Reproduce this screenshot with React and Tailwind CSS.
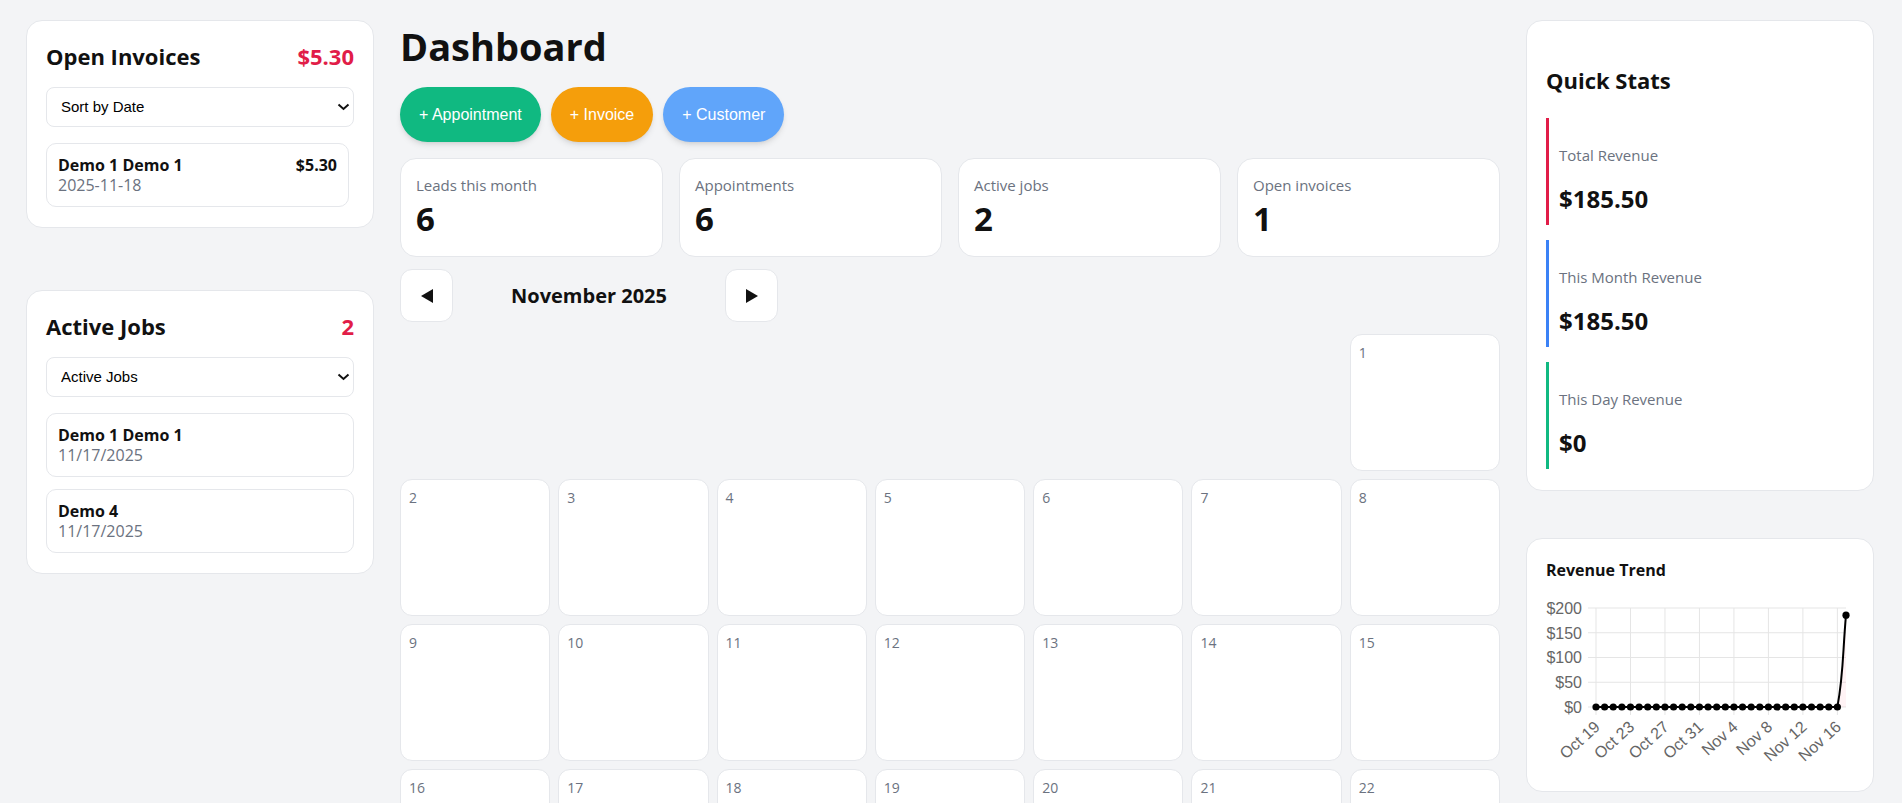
import React from 'react';

const invoices = [{ name: 'Demo 1 Demo 1', date: '2025-11-18', amount: '$5.30' }];
const jobs = [
  { name: 'Demo 1 Demo 1', date: '11/17/2025' },
  { name: 'Demo 4', date: '11/17/2025' },
];
const stats = [
  { label: 'Leads this month', value: 6 },
  { label: 'Appointments', value: 6 },
  { label: 'Active jobs', value: 2 },
  { label: 'Open invoices', value: 1 },
];
const quick = [
  { label: 'Total Revenue', value: '$185.50', bar: 'border-[#e11d48]' },
  { label: 'This Month Revenue', value: '$185.50', bar: 'border-[#3b82f6]' },
  { label: 'This Day Revenue', value: '$0', bar: 'border-[#10b981]' },
];

const Chevron = () => (
  <svg className="pointer-events-none absolute right-[4px] top-1/2 -translate-y-1/2" width="13" height="8" viewBox="0 0 13 8">
    <polyline points="1.5,1.5 6.5,6 11.5,1.5" fill="none" stroke="#111" strokeWidth="2" />
  </svg>
);

const Select = ({ value }) => (
  <div className="relative">
    <select className="h-10 w-full appearance-none rounded-lg border border-[#e5e7eb] bg-white pl-[14px] text-[15px] text-black font-['Liberation_Sans',Arial,sans-serif] outline-none">
      <option>{value}</option>
    </select>
    <Chevron />
  </div>
);

const SideCard = ({ title, badge, children }) => (
  <div className="rounded-2xl border border-[#e5e7eb] bg-white px-[19px] pt-[19px] pb-5">
    <div className="mb-[15px] flex items-center justify-between">
      <h2 className="text-[22px] font-bold leading-8 text-[#111]">{title}</h2>
      <span className="text-[22px] font-bold leading-8 text-[#e11d48]">{badge}</span>
    </div>
    {children}
  </div>
);

// Revenue trend chart, drawn by hand
const RevenueChart = () => {
  const x0 = 50, x1 = 300, yTop = 22, yBot = 121;
  const xs = (i) => x0 + (i * (x1 - x0)) / 29;
  const ys = (v) => yBot - (v / 200) * (yBot - yTop);
  const start = new Date(2025, 9, 19);
  const months = ['Oct', 'Nov'];
  const label = (i) => {
    const d = new Date(start.getTime() + i * 86400000);
    return `${months[d.getMonth() - 9]} ${d.getDate()}`;
  };
  const values = Array.from({ length: 30 }, (_, i) => (i === 29 ? 185.5 : 0));
  const ticks = [0, 4, 8, 12, 16, 20, 24, 28];
  const last = { x: xs(29), y: ys(185.5) };
  const prev = { x: xs(28), y: ys(0) };
  const curve = `M${prev.x} ${prev.y} C${prev.x + 6.3} ${prev.y - 33.6}, ${last.x - 3.4} ${last.y + 36.7}, ${last.x} ${last.y}`;
  return (
    <svg width="308" height="186" viewBox="0 0 308 186" className="font-['Liberation_Sans',Arial,sans-serif]">
      {[0, 50, 100, 150, 200].map((v) => (
        <g key={v}>
          <line x1={x0 - 8} x2={x1} y1={ys(v)} y2={ys(v)} stroke="#e5e5e5" strokeWidth="1" />
          <text x={x0 - 14} y={ys(v)} dy="0.36em" textAnchor="end" fontSize="16" fill="#666">${v}</text>
        </g>
      ))}
      {ticks.map((i) => (
        <g key={i}>
          <line x1={xs(i)} x2={xs(i)} y1={yTop} y2={yBot + 8} stroke="#e5e5e5" strokeWidth="1" />
          <text
            transform={`translate(${xs(i) + 1} ${yBot + 17}) rotate(-42)`}
            textAnchor="end"
            dy="0.36em"
            fontSize="16"
            fill="#666"
          >
            {label(i)}
          </text>
        </g>
      ))}
      <path d={`${curve} L${last.x} ${yBot} Z`} fill="rgba(255,99,132,0.08)" />
      <line x1={x0} x2={prev.x} y1={yBot} y2={yBot} stroke="#000" strokeWidth="2" />
      <path d={curve} fill="none" stroke="#000" strokeWidth="2" />
      {values.map((v, i) => (
        <circle key={i} cx={xs(i)} cy={ys(v)} r="3.6" fill="#000" />
      ))}
    </svg>
  );
};

const Triangle = ({ dir }) => (
  <svg width="12" height="14" viewBox="0 0 12 14">
    <polygon points={dir === 'left' ? '12,0 12,14 0,7' : '0,0 0,14 12,7'} fill="#111" />
  </svg>
);

export default function App() {
  const cells = [
    ...Array.from({ length: 6 }, () => null),
    ...Array.from({ length: 30 }, (_, i) => i + 1),
  ];

  return (
    <div className="min-h-screen bg-[#f3f4f6] font-['Open_Sans',sans-serif] text-[#111]">
      <div className="grid grid-cols-[348px_1100px_348px] items-start gap-x-[26px] px-[26px] pt-5 pb-10">
        {/* Left column */}
        <div className="flex flex-col gap-[62px]">
          <SideCard title="Open Invoices" badge="$5.30">
            <Select value="Sort by Date" />
            <div className="mt-4 mr-[5px] flex flex-col gap-3">
              {invoices.map((inv) => (
                <div key={inv.name} className="flex justify-between rounded-[10px] border border-[#e5e7eb] px-[11px] pt-3 pb-[10px]">
                  <div>
                    <div className="text-base font-bold leading-[18px]">{inv.name}</div>
                    <div className="text-base leading-[22px] text-[#6b7280]">{inv.date}</div>
                  </div>
                  <div className="text-base font-bold leading-[18px]">{inv.amount}</div>
                </div>
              ))}
            </div>
          </SideCard>

          <SideCard title="Active Jobs" badge="2">
            <Select value="Active Jobs" />
            <div className="mt-4 flex flex-col gap-3">
              {jobs.map((job) => (
                <div key={job.name} className="rounded-[10px] border border-[#e5e7eb] px-[11px] pt-3 pb-[10px]">
                  <div className="text-base font-bold leading-[18px]">{job.name}</div>
                  <div className="text-base leading-[22px] text-[#6b7280]">{job.date}</div>
                </div>
              ))}
            </div>
          </SideCard>
        </div>

        {/* Center column */}
        <div className="flex flex-col">
          <h1 className="mt-[2px] text-[38px] font-bold leading-[48px]">Dashboard</h1>
          <div className="mt-[17px] flex gap-2.5 font-['Liberation_Sans',Arial,sans-serif] text-base text-white">
            <button className="h-[55px] rounded-full bg-[#10b981] px-[19px] shadow-md">+ Appointment</button>
            <button className="h-[55px] rounded-full bg-[#f59e0b] px-[19px] shadow-md">+ Invoice</button>
            <button className="h-[55px] rounded-full bg-[#60a5fa] px-[19px] shadow-md">+ Customer</button>
          </div>

          <div className="mt-4 grid grid-cols-4 gap-4">
            {stats.map((s) => (
              <div key={s.label} className="rounded-2xl border border-[#e5e7eb] bg-white px-[15px] py-[15px]">
                <div className="text-[15px] leading-[22px] text-[#6b7280]">{s.label}</div>
                <div className="text-[33px] font-bold leading-[45px]">{s.value}</div>
              </div>
            ))}
          </div>

          <div className="mt-3 flex items-center">
            <button className="flex h-[53px] w-[53px] items-center justify-center rounded-xl border border-[#e5e7eb] bg-white">
              <Triangle dir="left" />
            </button>
            <div className="w-[272px] text-center text-xl font-bold">November 2025</div>
            <button className="flex h-[53px] w-[53px] items-center justify-center rounded-xl border border-[#e5e7eb] bg-white">
              <Triangle dir="right" />
            </button>
          </div>

          <div className="mt-3 grid grid-cols-7 gap-2">
            {cells.map((d, i) =>
              d === null ? (
                <div key={`e${i}`} className="h-[137px]" />
              ) : (
                <div key={d} className="h-[137px] rounded-xl border border-[#e5e7eb] bg-white p-2">
                  <div className="text-sm leading-5 text-[#6b7280]">{d}</div>
                  {d === 17 && (
                    <div className="mt-[5px] flex gap-[15px] pl-[6px]">
                      <div className="h-5 w-11 rounded-md border border-[#e5e7eb] bg-[#f9fafb]" />
                      <div className="h-5 w-[38px] rounded-md border border-[#e5e7eb] bg-[#f9fafb]" />
                    </div>
                  )}
                </div>
              )
            )}
          </div>
        </div>

        {/* Right column */}
        <div className="flex flex-col gap-[47px]">
          <div className="rounded-2xl border border-[#e5e7eb] bg-white px-[19px] pt-[19px] pb-[21px]">
            <h2 className="mt-6 mb-[22px] text-[22px] font-bold leading-8">Quick Stats</h2>
            <div className="flex flex-col gap-[15px]">
              {quick.map((q) => (
                <div key={q.label} className={`border-l-[3px] ${q.bar} pt-[26px] pb-[10px] pl-[10px]`}>
                  <div className="mb-[17px] text-[15px] leading-[22px] text-[#6b7280]">{q.label}</div>
                  <div className="text-2xl font-bold leading-8">{q.value}</div>
                </div>
              ))}
            </div>
          </div>

          <div className="rounded-2xl border border-[#e5e7eb] bg-white p-[19px]">
            <h3 className="mb-1 text-base font-bold leading-6">Revenue Trend</h3>
            <RevenueChart />
          </div>
        </div>
      </div>
    </div>
  );
}
